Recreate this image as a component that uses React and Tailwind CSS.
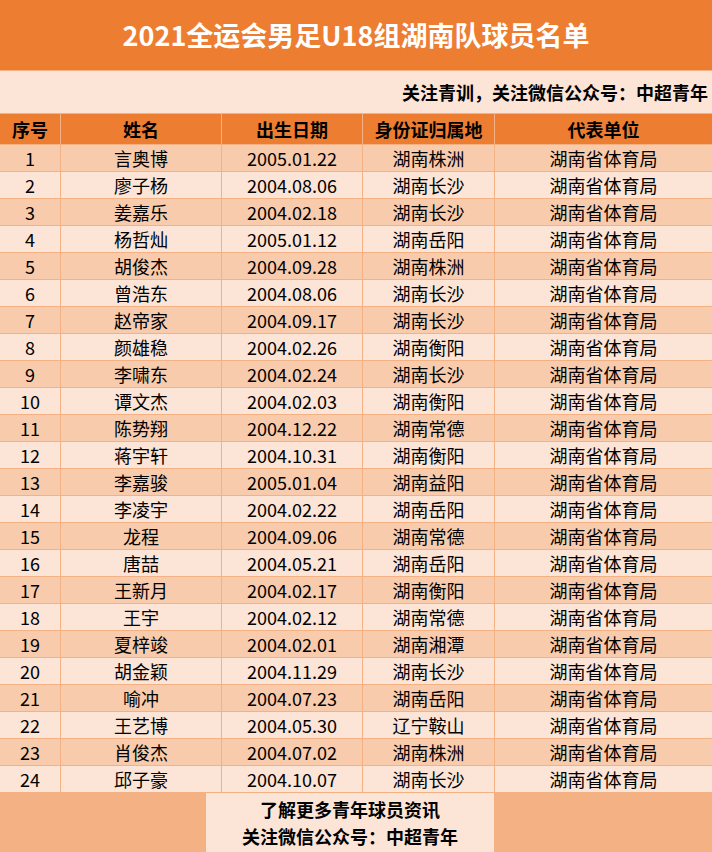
const players = [
  ["1", "言奥博", "2005.01.22", "湖南株洲"],
  ["2", "廖子杨", "2004.08.06", "湖南长沙"],
  ["3", "姜嘉乐", "2004.02.18", "湖南长沙"],
  ["4", "杨哲灿", "2005.01.12", "湖南岳阳"],
  ["5", "胡俊杰", "2004.09.28", "湖南株洲"],
  ["6", "曾浩东", "2004.08.06", "湖南长沙"],
  ["7", "赵帝家", "2004.09.17", "湖南长沙"],
  ["8", "颜雄稳", "2004.02.26", "湖南衡阳"],
  ["9", "李啸东", "2004.02.24", "湖南长沙"],
  ["10", "谭文杰", "2004.02.03", "湖南衡阳"],
  ["11", "陈势翔", "2004.12.22", "湖南常德"],
  ["12", "蒋宇轩", "2004.10.31", "湖南衡阳"],
  ["13", "李嘉骏", "2005.01.04", "湖南益阳"],
  ["14", "李凌宇", "2004.02.22", "湖南岳阳"],
  ["15", "龙程", "2004.09.06", "湖南常德"],
  ["16", "唐喆", "2004.05.21", "湖南岳阳"],
  ["17", "王新月", "2004.02.17", "湖南衡阳"],
  ["18", "王宇", "2004.02.12", "湖南常德"],
  ["19", "夏梓竣", "2004.02.01", "湖南湘潭"],
  ["20", "胡金颖", "2004.11.29", "湖南长沙"],
  ["21", "喻冲", "2004.07.23", "湖南岳阳"],
  ["22", "王艺博", "2004.05.30", "辽宁鞍山"],
  ["23", "肖俊杰", "2004.07.02", "湖南株洲"],
  ["24", "邱子豪", "2004.10.07", "湖南长沙"],
];

const cols = "grid grid-cols-[60px_160px_140px_131px_217px] gap-x-px";

function Row({ cells, odd }) {
  const bg = odd ? "bg-[#f8cbad]" : "bg-[#fce4d6]";
  return (
    <div className={`${cols} border-t border-[#f4b183]`}>
      {cells.map((c, i) => (
        <div
          key={i}
          className={`${bg} h-[26px] flex items-center justify-center text-[18px] leading-none text-black`}
        >
          {c}
        </div>
      ))}
    </div>
  );
}

export default function App() {
  const headers = ["序号", "姓名", "出生日期", "身份证归属地", "代表单位"];
  return (
    <div
      className="w-[712px] h-[852px] overflow-hidden bg-[#f4b183]"
      style={{ fontFamily: '"Noto Sans CJK SC", "Noto Sans", sans-serif' }}
    >
      <div className="h-[70px] bg-[#ed7d31] flex items-center justify-center text-white font-bold text-[27px] leading-none pb-[2px]">
        2021全运会男足U18组湖南队球员名单
      </div>
      <div className="mt-px h-[42px] bg-[#fce4d6] flex items-center justify-end pr-[4px] font-bold text-[18px] leading-none text-black">
        关注青训，关注微信公众号：中超青年
      </div>
      <div className={`${cols} mt-px`}>
        {headers.map((h) => (
          <div
            key={h}
            className="h-[30px] bg-[#ed7d31] flex items-center justify-center font-bold text-[18px] leading-none text-black"
          >
            {h}
          </div>
        ))}
      </div>
      {players.map((p, i) => (
        <Row key={p[0]} cells={[...p, "湖南省体育局"]} odd={i % 2 === 0} />
      ))}
      <div className="mt-px flex">
        <div className="w-[206px]" />
        <div className="w-[288px] h-[59px] bg-[#fce4d6] flex flex-col items-center justify-center font-bold text-[18px] leading-[27px] text-black">
          <span>了解更多青年球员资讯</span>
          <span>关注微信公众号：中超青年</span>
        </div>
      </div>
    </div>
  );
}
